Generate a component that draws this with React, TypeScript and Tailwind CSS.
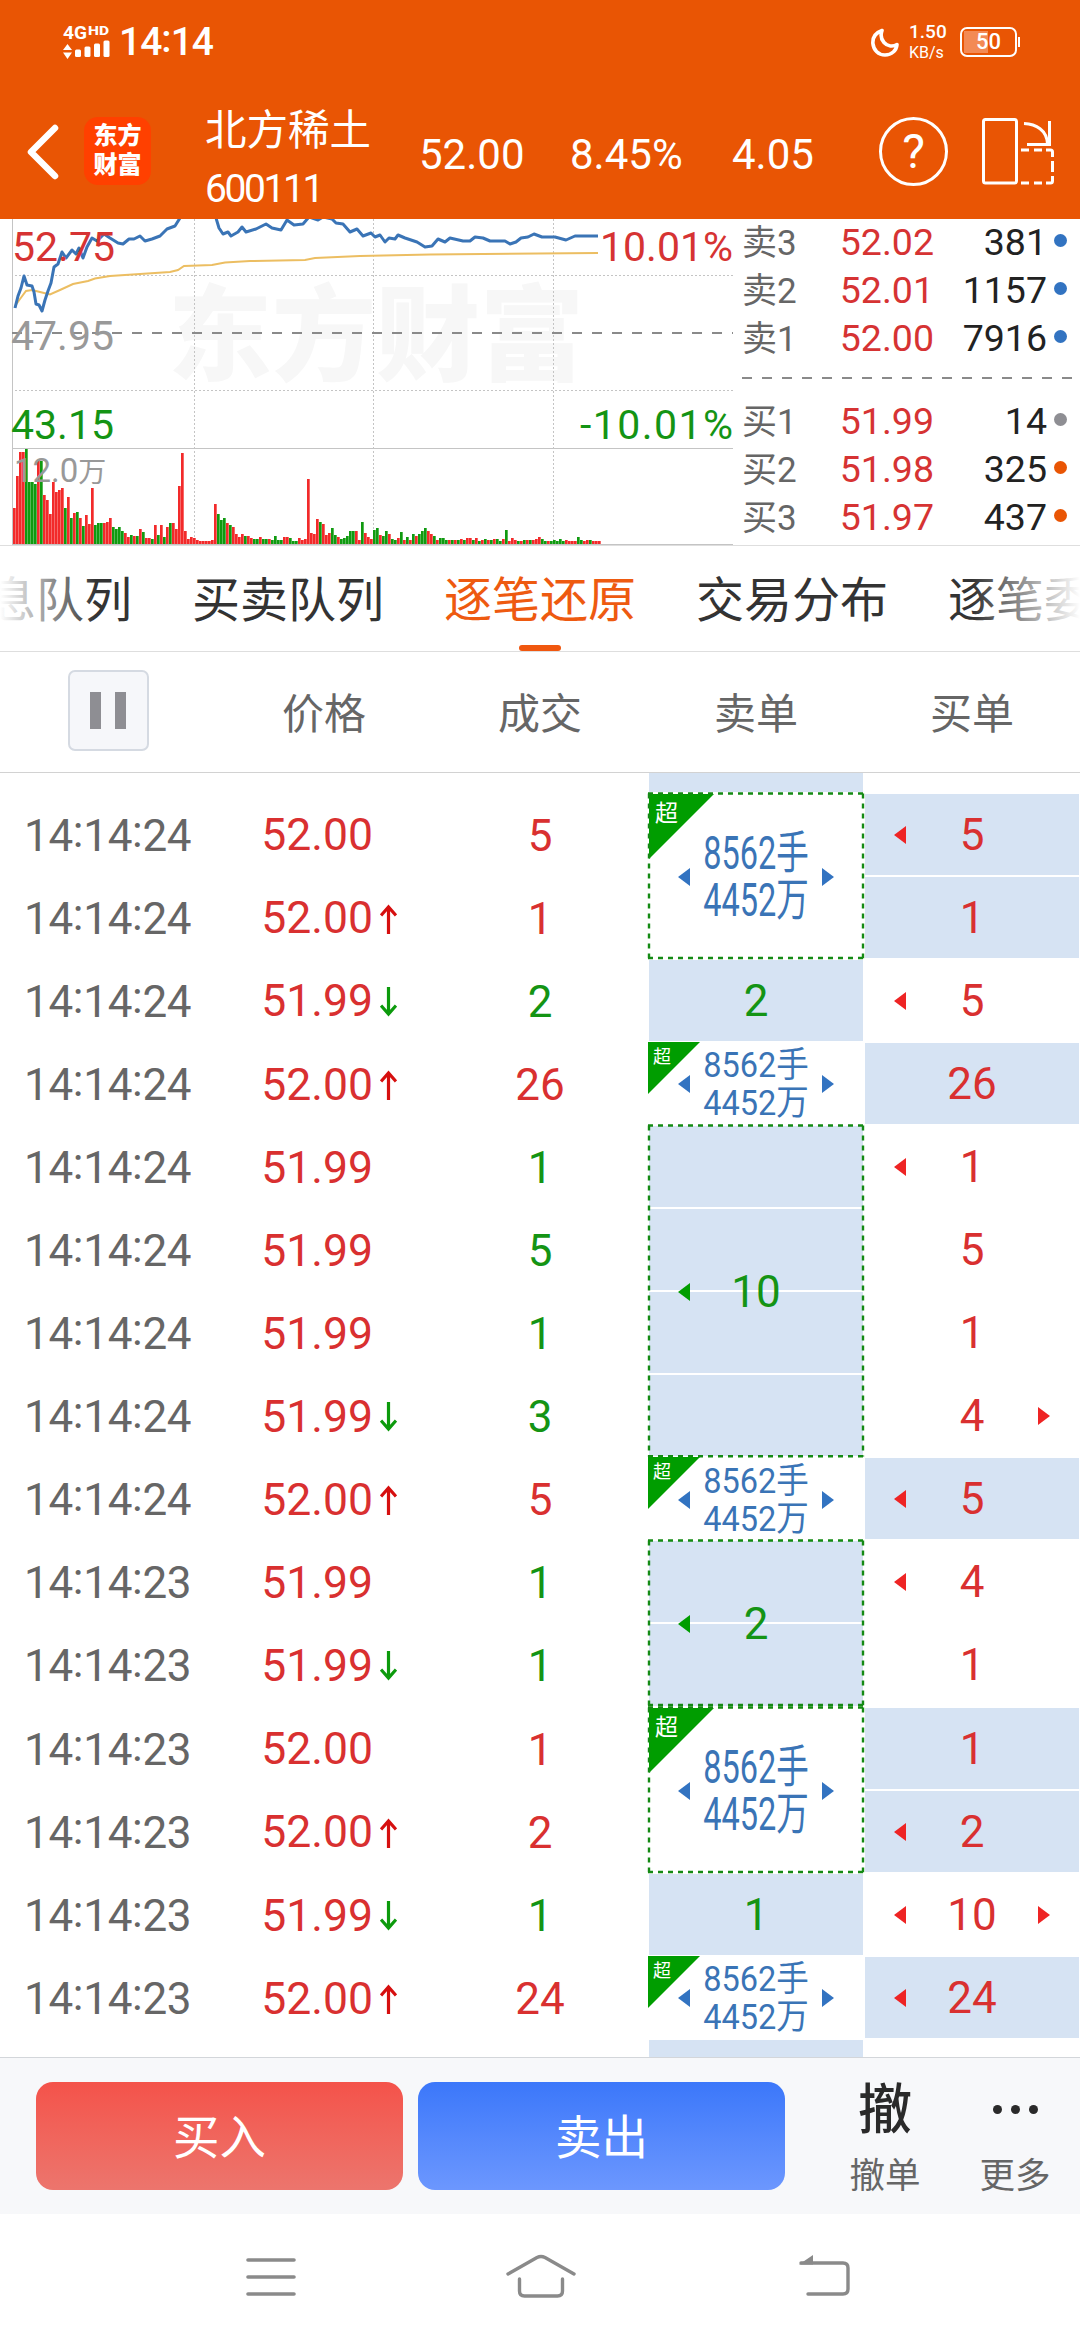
import React from 'react'

type Tick = {
    time: string
    price: string
    dir?: 'up' | 'down'
    vol: string
    side: 'r' | 'g'
    buy: string
    fill?: boolean
    left?: boolean
    right?: boolean
}

type SellGroup = {
    span: number
    text?: string
    big?: boolean
    left?: boolean
}

const ticks: Tick[] = [
    { time: '14:14:24', price: '52.00', vol: '5', side: 'r', buy: '5', fill: true, left: true },
    { time: '14:14:24', price: '52.00', dir: 'up', vol: '1', side: 'r', buy: '1', fill: true },
    { time: '14:14:24', price: '51.99', dir: 'down', vol: '2', side: 'g', buy: '5', left: true },
    { time: '14:14:24', price: '52.00', dir: 'up', vol: '26', side: 'r', buy: '26', fill: true },
    { time: '14:14:24', price: '51.99', vol: '1', side: 'g', buy: '1', left: true },
    { time: '14:14:24', price: '51.99', vol: '5', side: 'g', buy: '5' },
    { time: '14:14:24', price: '51.99', vol: '1', side: 'g', buy: '1' },
    { time: '14:14:24', price: '51.99', dir: 'down', vol: '3', side: 'g', buy: '4', right: true },
    { time: '14:14:24', price: '52.00', dir: 'up', vol: '5', side: 'r', buy: '5', fill: true, left: true },
    { time: '14:14:23', price: '51.99', vol: '1', side: 'g', buy: '4', left: true },
    { time: '14:14:23', price: '51.99', dir: 'down', vol: '1', side: 'g', buy: '1' },
    { time: '14:14:23', price: '52.00', vol: '1', side: 'r', buy: '1', fill: true },
    { time: '14:14:23', price: '52.00', dir: 'up', vol: '2', side: 'r', buy: '2', fill: true, left: true },
    { time: '14:14:23', price: '51.99', dir: 'down', vol: '1', side: 'g', buy: '10', left: true, right: true },
    { time: '14:14:23', price: '52.00', dir: 'up', vol: '24', side: 'r', buy: '24', fill: true, left: true },
]

const sells: SellGroup[] = [
    { span: 1 },
    { span: 2, big: true },
    { span: 1, text: '2' },
    { span: 1, big: true },
    { span: 4, text: '10', left: true },
    { span: 1, big: true },
    { span: 2, text: '2', left: true },
    { span: 2, big: true },
    { span: 1, text: '1' },
    { span: 1, big: true },
    { span: 1 },
]

const asks = [
    ['卖3', '52.02', '381', 'bg-[#3273c1]'],
    ['卖2', '52.01', '1157', 'bg-[#3273c1]'],
    ['卖1', '52.00', '7916', 'bg-[#3273c1]'],
]
const bids = [
    ['买1', '51.99', '14', 'bg-[#8e8e93]'],
    ['买2', '51.98', '325', 'bg-[#e95504]'],
    ['买3', '51.97', '437', 'bg-[#e95504]'],
]

const volume =
    'r36 r68 r92 r92 g95 g62 g62 g60 r84 g83 r49 r44 r30 r62 r52 r54 r56 g36 r47 g26 r31 g32 r26 g18 r29 r20 r56 g19 g21 g21 r21 r22 r26 g17 g15 g17 g13 r11 r7 g9 r8 g8 r15 g12 r6 r6 g5 r19 g9 r19 g7 r17 g21 r21 r15 r58 r91 r13 r5 r7 r6 r4 r3 r3 r3 r3 r4 r40 g30 g24 g26 r21 g19 r17 r10 r7 r10 g8 r8 r6 g5 g5 r7 g5 g5 r5 g4 g8 g4 g4 r7 r7 g6 g3 g3 r6 r4 r5 r65 r11 r10 r25 g22 r20 r9 r11 g16 g9 r7 g5 g6 g8 g13 g13 r13 r4 g22 r11 r7 r5 g14 g16 r9 g8 g13 r10 g5 g4 r6 g12 r4 g7 r4 g10 r8 g10 g13 g16 r13 r10 g8 r4 g6 g6 g4 r4 g4 r4 g4 r5 g4 r6 r6 g4 r6 g3 r4 g5 r4 g4 r5 g5 g3 r5 g14 r3 r6 r4 g3 r3 g4 r4 g4 r4 r5 r7 g5 g3 r3 g3 g4 g3 g5 g3 r4 r3 r3 r3 g7 g4 r3 r4 g4 r3 r3 r3'
        .split(' ')
        .slice(0, 196)

function Tri({ right, className }: { right?: boolean; className: string }) {
    return (
        <svg width="12" height="18" viewBox="0 0 12 18" className={className}>
            <path d={right ? 'M0 0L12 9L0 18Z' : 'M12 0L0 9L12 18Z'} fill="currentColor" />
        </svg>
    )
}

function StatusBar() {
    return (
        <div className="flex h-[84px] items-center justify-between pl-[61px] pr-[60px] text-white">
            <div className="flex items-center">
                <svg width="50" height="38" viewBox="-2 -4 50 38" fill="#fff" className="mb-[4px] overflow-visible">
                    <text x="0" y="14" fontSize="19" fontWeight="700" textLength="24" lengthAdjust="spacingAndGlyphs">4G</text>
                    <text x="25" y="10" fontSize="13" fontWeight="800" textLength="21" lengthAdjust="spacingAndGlyphs">HD</text>
                    <path d="M0 25L4.500 19L9 25ZM0 27.500L4.500 34L9 27.500Z" />
                    <rect x="12" y="24.500" width="6" height="7.500" rx="1.500" />
                    <rect x="21.500" y="21.500" width="6" height="10.500" rx="1.500" />
                    <rect x="31" y="18.500" width="6" height="13.500" rx="1.500" />
                    <rect x="40.500" y="15.500" width="6" height="16.500" rx="1.500" />
                </svg>
                <div className="ml-[8px] text-[39px] font-medium leading-none tracking-[-1px]">
                    14<span className="relative -top-[3px]">:</span>14
                </div>
            </div>
            <div className="flex items-center">
                <svg width="28" height="29" viewBox="0 0 28 29" fill="none" stroke="#fff" strokeWidth="3.600" strokeLinejoin="round">
                    <path d="M11 2.500C4 5 1.500 10 1.900 15.500C2.500 22 7.500 27 14 27C20.500 27 25.500 22.500 26 16.500C22 19 16.500 18.500 13 14.500C10 11 9.500 6.500 11 2.500Z" />
                </svg>
                <div className="ml-[10px] flex h-[40px] w-[38px] flex-col justify-between">
                    <div className="text-[19px] font-medium leading-[20px]">1.50</div>
                    <div className="text-[16px] leading-[18px]">KB/s</div>
                </div>
                <div className="relative ml-[13px] flex h-[30px] w-[57px] items-center justify-center rounded-[7px] border-2 border-white">
                    <div className="absolute left-[2px] top-[2px] h-[22px] w-[24px] bg-[#f38a55]" />
                    <span className="relative text-[22px] font-medium leading-none">50</span>
                </div>
                <div className="ml-px h-[10px] w-[2px] bg-white" />
            </div>
        </div>
    )
}

function TitleBar() {
    return (
        <div className="flex h-[135px] items-start pl-[27px] text-white">
            <svg width="32" height="56" viewBox="0 0 32 56" fill="none" stroke="#fff" strokeWidth="6.500" strokeLinecap="round" strokeLinejoin="round" className="mt-[40px]">
                <path d="M28 4L4 28L28 52" />
            </svg>
            <div className="ml-[25px] mt-[33px] flex h-[68px] w-[67px] flex-col items-center justify-center rounded-[14px] bg-[#ff4000] text-[24px] font-black leading-[29px]">
                <span>东方</span>
                <span>财富</span>
            </div>
            <div className="ml-[54px] mt-[22px] w-[214px]">
                <div className="text-[41.500px] leading-[50px]">北方稀土</div>
                <div className="mt-[8px] text-[39px] leading-[50px] tracking-[-2.400px]">600111</div>
            </div>
            <div className="mt-[46px] w-[151px] text-[42px] leading-[50px]">52.00</div>
            <div className="mt-[46px] w-[162px] text-[42px] leading-[50px]">8.45%</div>
            <div className="mt-[46px] w-[147px] text-[42px] leading-[50px]">4.05</div>
            <div className="mt-[33px] flex size-[69px] items-center justify-center rounded-full border-[3px] border-white text-[48px] leading-none">
                ?
            </div>
            <svg width="74" height="68" viewBox="0 0 74 68" fill="none" stroke="#fff" strokeWidth="3" className="ml-[33px] mt-[33px]">
                <rect x="2.500" y="2.500" width="33" height="63.500" rx="2" />
                <path d="M43 6.500C55 7 66 13 66.500 27M68.500 4V27.500H46" />
                <path d="M40 33H48M53 33H61M65 33H69.500Q71.500 33 71.500 35V40M71.500 44V55M71.500 59V64Q71.500 66 69.500 66H65M61 66H53M48 66H40" />
            </svg>
        </div>
    )
}

function Chart() {
    return (
        <svg width="734" height="326" viewBox="0 219 734 326" className="block shrink-0">
            <g fontFamily="Noto Sans CJK SC" fontWeight="900" fontSize="104" fill="#f7f7f7">
                <text x="168" y="373">东方财富</text>
            </g>
            <g stroke="#c4c4c4" strokeWidth="1" shapeRendering="crispEdges">
                <path d="M12.500 219V545M12.500 448.500H733M12.500 544.500H733" />
                <path d="M15 275.500H733M15 390.500H733M194.500 219V545M373.500 219V545M553.500 219V545" strokeDasharray="2 2" />
            </g>
            <path d="M12 333H733" stroke="#8a8a8a" strokeWidth="2" strokeDasharray="10 10" />
            {volume.map((v, i) => (
                <rect
                    key={i}
                    x={13 + i * 3}
                    y={544 - Number(v.slice(1))}
                    width="2.700"
                    height={v.slice(1)}
                    fill={v[0] === 'r' ? '#f22a2a' : '#109a10'}
                />
            ))}
            <polyline
                fill="none"
                stroke="#ecbe62"
                strokeWidth="2"
                points="15,306 20,299 26,291 32,290 40,292 50,294.500 60,290 73,284 88,281 95,278.500 110,276 140,274 170,272 178,270 184,266 212,265 225,262.500 250,261 305,260 315,258 360,256 430,254.500 598,253"
            />
            <g fill="none" stroke="#3a74b6" strokeWidth="3" strokeLinejoin="round">
                <polyline points="15,308 18,296 21,288 24,276 27,285 32,286 34,292 36,304 39,305 42,311 45,300 48,291 51,283 54,267 58,264 62,252 66,258 72,250 76,254 79,248 83,258 87,247 92,238 97,241 104,234 110,238 118,243 123,244 129,239 134,239 140,236 145,241 152,239 160,236 167,229 175,226 180,218" />
                <polyline points="216,218 219,228 223,234 228,232 231,236 238,232 242,227 246,232 256,229 266,224 272,228 281,230 287,220 294,225 303,224 309,217 318,220 323,217 332,219 336,223 343,224 350,232 357,229 363,236 371,233 375,237 380,235 385,242 389,238 395,239 398,235 405,238 417,242 425,247 432,246 438,239 445,242 450,238 463,241 470,241 475,237 483,238 490,241 505,241 510,244 516,242 521,238 528,237 534,234 542,237 555,237 566,240 575,236 598,236" />
            </g>
            <g fontSize="41" fontFamily="Roboto">
                <text x="12" y="260.500" fill="#d63333">52.75</text>
                <text x="11" y="349.500" fill="#999">47.95</text>
                <text x="11" y="438.500" fill="#149414">43.15</text>
                <text x="733" y="260.500" textAnchor="end" fill="#d63333">10.01%</text>
                <text x="580" y="438.500" textLength="153" fill="#149414">-10.01%</text>
            </g>
            <text x="14" y="482" fontSize="33" fill="#999">12.0<tspan fontSize="28">万</tspan></text>
        </svg>
    )
}

function BookRow({ row }: { row: string[] }) {
    return (
        <div className="flex h-[48px] items-center">
            <span className="w-[70px] text-[35px] leading-none text-[#666]">{row[0]}</span>
            <span className="w-[122px] text-right text-[37.500px] leading-none text-[#d63333]">{row[1]}</span>
            <span className="w-[113px] text-right text-[37.500px] leading-none text-[#222]">{row[2]}</span>
            <span className={'mb-[6px] ml-[7px] size-[13px] rounded-full ' + row[3]} />
        </div>
    )
}

function OrderBook() {
    return (
        <div className="flex-1 pl-[8px]">
            {asks.map((r) => (
                <BookRow key={r[0]} row={r} />
            ))}
            <svg width="331" height="7" className="my-[14px] block">
                <path d="M0 1H331" stroke="#8a8a8a" strokeWidth="2" strokeDasharray="10 10" />
            </svg>
            {bids.map((r) => (
                <BookRow key={r[0]} row={r} />
            ))}
        </div>
    )
}

function Tabs() {
    return (
        <div className="relative h-[107px] overflow-hidden border-y border-[#dedede] bg-white">
            <div className="ml-[-12px] flex h-[105px] w-[1200px] items-center gap-[60px] pt-[5px] text-[48px] leading-none text-[#333]">
                <span>息队列</span>
                <span>买卖队列</span>
                <span className="text-[#ee5a10]">逐笔还原</span>
                <span>交易分布</span>
                <span>逐笔委</span>
            </div>
            <div className="absolute bottom-0 left-[519px] h-[6px] w-[42px] rounded-full bg-[#f0570f]" />
            <div className="absolute left-0 top-0 h-[98px] w-[96px] bg-linear-to-r from-white to-white/0" />
            <div className="absolute right-0 top-0 h-[98px] w-[108px] bg-linear-to-l from-white to-white/0" />
        </div>
    )
}

function TableHead() {
    return (
        <div className="grid h-[121px] grid-cols-5 items-center border-b border-[#d2d2d2] bg-white text-center text-[42px] leading-none text-[#666]">
            <div className="mx-auto mb-[3px] flex size-[81px] items-center justify-center gap-[14px] rounded-[7px] border-2 border-[#d5dae2] bg-[#f6f7fa]">
                <span className="h-[37px] w-[11px] bg-[#8e8e93]" />
                <span className="h-[37px] w-[11px] bg-[#8e8e93]" />
            </div>
            <span className="pt-[5px]">价格</span>
            <span className="pt-[5px]">成交</span>
            <span className="pt-[5px]">卖单</span>
            <span className="pt-[5px]">买单</span>
        </div>
    )
}

function TickRow({ t }: { t: Tick }) {
    const [h, m, s] = t.time.split(':')
    return (
        <div className="flex h-[83.1px] items-center pt-[3px] text-[44px] leading-none">
            <span className="w-[216px] pl-[24px] tracking-[-0.300px] text-[#666]">
                {h}<span className="relative -top-[4px]">:</span>{m}<span className="relative -top-[4px]">:</span>{s}
            </span>
            <span className="w-[157px] text-right text-[44.500px] text-[#d93030]">{t.price}</span>
            <span className="w-[59px] pl-[7px]">
                {t.dir && (
                    <svg width="17" height="30" viewBox="0 0 17 30" fill="none" strokeWidth="3.200" stroke={t.dir === 'up' ? '#d60f0f' : '#0c9a0c'}>
                        <path d={t.dir === 'up' ? 'M8.500 30V3M1 11.500L8.500 3L16 11.500' : 'M8.500 0V27M1 18.500L8.500 27L16 18.500'} />
                    </svg>
                )}
            </span>
            <span className={'w-[216px] text-center ' + (t.side === 'r' ? 'text-[#d93030]' : 'text-[#149414]')}>{t.vol}</span>
        </div>
    )
}

function SellCell({ g }: { g: SellGroup }) {
    const h = g.span * 83.1
    const multi = g.span > 1
    return (
        <div className="relative flex flex-col" style={{ height: h }}>
            {Array.from({ length: g.span }, (_, i) => (
                <div key={i} className={'m-px flex-1 ' + (g.big ? 'bg-white' : 'bg-[#d6e3f3]')} />
            ))}
            {g.big && (
                <div className={'absolute text-white ' + (multi ? 'left-px top-px' : 'left-0 top-0')}>
                    <svg width={multi ? 65 : 52} height={multi ? 65 : 52} viewBox="0 0 10 10">
                        <path d="M0 0H10L0 10Z" fill="#009d00" />
                    </svg>
                    <span className={'absolute leading-none ' + (multi ? 'left-[6px] top-[8px] text-[23px]' : 'left-[5px] top-[6px] text-[18px]')}>超</span>
                </div>
            )}
            {multi && (
                <svg width="218" height={h + 2} className="absolute -left-px -top-px overflow-visible">
                    <path
                        d={`M1 1.500H217M1 ${h - 0.2}H217M2 1.500V${h}M216 1.500V${h}`}
                        fill="none"
                        stroke="#148a14"
                        strokeWidth="2.400"
                        strokeDasharray="5 5"
                    />
                </svg>
            )}
            <div className="absolute inset-0 flex items-center justify-between px-[30px] pt-[2px]">
                <Tri className={g.big ? 'text-[#3273c1]' : g.left ? 'text-[#009d00]' : 'invisible'} />
                {g.big ? (
                    <div className={'text-[32.500px] text-[#3a74b6] ' + (multi ? 'scale-y-[1.4] pt-[1px] leading-[33.5px]' : 'scale-y-[1.07] leading-[36px]')}>
                        <div>8562手</div>
                        <div>4452万</div>
                    </div>
                ) : (
                    <span className="text-[44px] leading-none text-[#149414]">{g.text}</span>
                )}
                <Tri right className={g.big ? 'text-[#3273c1]' : 'invisible'} />
            </div>
        </div>
    )
}

function BuyCell({ t }: { t: Tick }) {
    return (
        <div className="flex h-[83.1px] p-px">
            <div className={'flex flex-1 items-center justify-between px-[29px] pt-px text-[44px] leading-none text-[#d93030] ' + (t.fill ? 'bg-[#d6e3f3]' : '')}>
                <Tri className={t.left ? 'text-[#ee2424]' : 'invisible'} />
                <span>{t.buy}</span>
                <Tri right className={t.right ? 'text-[#ee2424]' : 'invisible'} />
            </div>
        </div>
    )
}

function TickTable() {
    return (
        <div className="h-[1284px] overflow-hidden bg-white">
            <div className="-mt-[63.6px] flex">
                <div className="w-[648px] pt-[83.1px]">
                    {ticks.map((t, i) => (
                        <TickRow key={i} t={t} />
                    ))}
                </div>
                <div className="w-[216px]">
                    {sells.map((g, i) => (
                        <SellCell key={i} g={g} />
                    ))}
                </div>
                <div className="w-[216px] pt-[83.1px]">
                    {ticks.map((t, i) => (
                        <BuyCell key={i} t={t} />
                    ))}
                </div>
            </div>
        </div>
    )
}

function Footer() {
    return (
        <div className="flex h-[157px] border-t border-[#d3d6da] bg-[#f7f8fa] pl-[36px] pt-[24px]">
            <button className="h-[108px] w-[367px] rounded-[17px] bg-linear-to-b from-[#f4524a] to-[#ec756d] pt-[4px] text-[46.500px] leading-none text-white">
                买入
            </button>
            <button className="ml-[15px] h-[108px] w-[367px] rounded-[17px] bg-linear-to-b from-[#3b77fa] to-[#6c97fe] pt-[4px] text-[46.500px] leading-none text-white">
                卖出
            </button>
            <div className="ml-[35px] w-[130px] text-center">
                <div className="h-[54px] pt-[2px] text-[54px] font-medium leading-[54px] text-[#2a2a2a]">撤</div>
                <div className="mt-[22px] text-[35.500px] leading-[36px] text-[#666]">撤单</div>
            </div>
            <div className="w-[130px] text-center">
                <div className="flex h-[54px] items-center justify-center gap-[9px]">
                    <span className="size-[9px] rounded-full bg-[#2a2a2a]" />
                    <span className="size-[9px] rounded-full bg-[#2a2a2a]" />
                    <span className="size-[9px] rounded-full bg-[#2a2a2a]" />
                </div>
                <div className="mt-[22px] text-[35.500px] leading-[36px] text-[#666]">更多</div>
            </div>
        </div>
    )
}

function NavBar() {
    return (
        <div className="flex h-[126px] items-start bg-white pl-[244px] pt-[38px]">
            <svg width="54" height="50" viewBox="0 0 54 50" stroke="#8a8a8a" strokeWidth="3.600" strokeLinecap="round">
                <path d="M4 8H50M4 25H50M4 42H50" />
            </svg>
            <svg width="76" height="50" viewBox="0 0 76 50" fill="none" stroke="#8a8a8a" strokeWidth="3.400" strokeLinecap="round" strokeLinejoin="round" className="ml-[205px]">
                <path d="M5 22L34 5.500Q38 3.500 42 5.500L71 22M16.500 27V39Q16.500 44 21.500 44H54.500Q59.500 44 59.500 39V27" />
            </svg>
            <svg width="56" height="50" viewBox="0 0 56 50" fill="none" stroke="#8a8a8a" strokeWidth="3.400" className="ml-[217px]">
                <path d="M5 11H47Q52 11 52 16V37Q52 42 47 42H12" strokeLinecap="round" />
                <path d="M3 12.500L17 3V12.500Z" fill="#8a8a8a" stroke="none" />
            </svg>
        </div>
    )
}

export default function App() {
    return (
        <div className='h-[2340px] w-[1080px] overflow-hidden bg-white font-[Roboto,"Noto_Sans_CJK_SC",sans-serif]'>
            <div className="h-[219px] bg-[#e95504]">
                <StatusBar />
                <TitleBar />
            </div>
            <div className="flex h-[326px] overflow-hidden">
                <Chart />
                <OrderBook />
            </div>
            <Tabs />
            <TableHead />
            <TickTable />
            <Footer />
            <NavBar />
        </div>
    )
}
